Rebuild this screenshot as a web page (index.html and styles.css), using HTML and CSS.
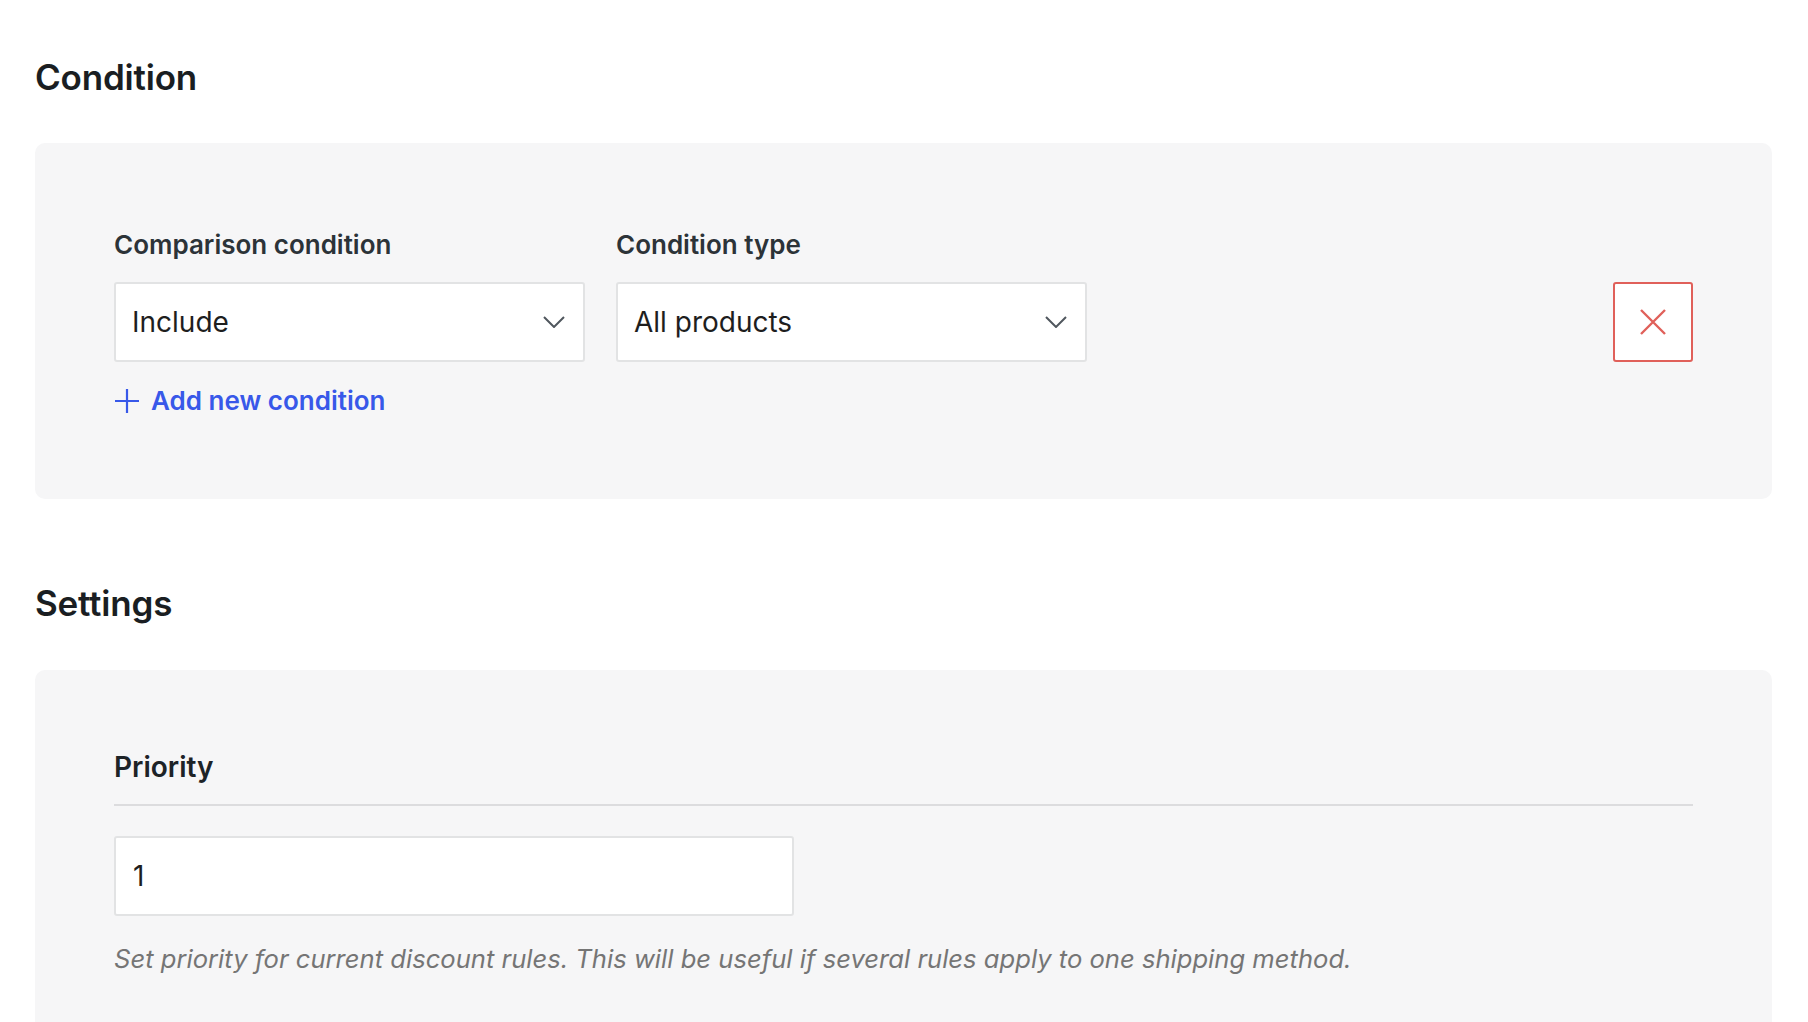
FILE: index.html
```html
<!DOCTYPE html>
<html lang="en">
<head>
<meta charset="utf-8">
<title>Condition settings</title>
<link rel="stylesheet" href="styles.css">
</head>
<body>
<div class="page">
  <h1 class="section-title">Condition</h1>
  <div class="card card-condition">
    <div class="condition-row">
      <div class="field">
        <div class="field-label">Comparison condition</div>
        <div class="select">
          <span class="select-value">Include</span>
          <svg class="chevron" width="22" height="12" viewBox="0 0 22 12"><path d="M1 1 L11 11 L21 1" fill="none" stroke="#50575e" stroke-width="2"/></svg>
        </div>
      </div>
      <div class="field">
        <div class="field-label">Condition type</div>
        <div class="select">
          <span class="select-value">All products</span>
          <svg class="chevron" width="22" height="12" viewBox="0 0 22 12"><path d="M1 1 L11 11 L21 1" fill="none" stroke="#50575e" stroke-width="2"/></svg>
        </div>
      </div>
      <div class="spacer"></div>
      <div class="remove-btn">
        <svg width="26" height="26" viewBox="0 0 26 26"><path d="M1 1 L25 25 M25 1 L1 25" fill="none" stroke="#e0605a" stroke-width="2.4"/></svg>
      </div>
    </div>
    <div class="add-link">
      <svg class="plus" width="26" height="26" viewBox="0 0 26 26"><path d="M13 1 V25 M1 13 H25" fill="none" stroke="#3858e9" stroke-width="2.2"/></svg>
      <span>Add new condition</span>
    </div>
  </div>

  <h1 class="section-title settings-title">Settings</h1>
  <div class="card card-settings">
    <div class="setting-label">Priority</div>
    <div class="divider"></div>
    <div class="text-input">1</div>
    <p class="help">Set priority for current discount rules. This will be useful if several rules apply to one shipping method.</p>
  </div>
</div>
</body>
</html>
```
FILE: styles.css
```css
html, body {
  margin: 0;
  padding: 0;
  background: #ffffff;
}
body {
  font-family: Inter, "Noto Sans", "Liberation Sans", sans-serif;
  color: #1e1e1e;
  overflow: hidden;
}
.page {
  padding: 55px 36px 0 35px;
}
.section-title {
  margin: 0;
  font-size: 35px;
  line-height: 44px;
  font-weight: 600;
  color: #1a1e22;
  letter-spacing: -0.2px;
}
.settings-title {
  margin-top: 82px;
}
.card {
  background: #f6f6f7;
  border-radius: 10px;
}
.card-condition {
  margin-top: 44px;
  padding: 86px 79px 82px 79px;
}
.condition-row {
  display: flex;
  align-items: flex-end;
  gap: 31px;
}
.field {
  width: 471px;
}
.field-label, .setting-label {
  font-size: 26px;
  line-height: 32px;
  font-weight: 600;
  color: #2c3338;
  margin-bottom: 21px;
}
.select {
  box-sizing: border-box;
  height: 80px;
  background: #fff;
  border: 2px solid #e2e3e4;
  border-radius: 3px;
  display: flex;
  align-items: center;
  justify-content: space-between;
  padding: 0 18px 0 16px;
}
.select-value {
  font-size: 28px;
  color: #1e1e1e;
}
.spacer {
  flex: 1;
}
.remove-btn {
  box-sizing: border-box;
  width: 80px;
  height: 80px;
  background: #fff;
  border: 2px solid #e0605a;
  border-radius: 3px;
  display: flex;
  align-items: center;
  justify-content: center;
}
.add-link {
  margin-top: 23px;
  display: flex;
  align-items: center;
  gap: 11px;
  color: #3858e9;
  font-size: 26px;
  line-height: 32px;
  font-weight: 600;
}
.card-settings {
  margin-top: 45px;
  padding: 80px 79px 120px 79px;
}
.setting-label {
  font-size: 28px;
  line-height: 34px;
  color: #1d2327;
  margin-bottom: 20px;
}
.divider {
  height: 2px;
  background: #dcdcde;
  margin-bottom: 30px;
}
.text-input {
  box-sizing: border-box;
  width: 680px;
  height: 80px;
  background: #fff;
  border: 2px solid #e2e3e4;
  border-radius: 3px;
  display: flex;
  align-items: center;
  padding-left: 17px;
  font-size: 28px;
  color: #1e1e1e;
}
.help {
  margin: 27px 0 0 0;
  font-size: 25.6px;
  line-height: 32px;
  font-style: italic;
  color: #757575;
}
```
